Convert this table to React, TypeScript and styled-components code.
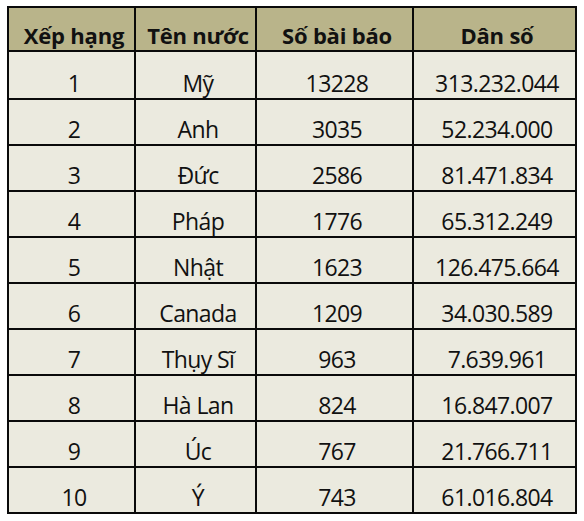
import React from "react";
import styled, { createGlobalStyle } from "styled-components";

const Global = createGlobalStyle`
  html, body { margin: 0; padding: 0; background: #ffffff; }
  body { font-family: "Open Sans", "Noto Sans", sans-serif; }
`;

const Page = styled.div`
  padding: 6px 0 0 7px;
`;

const Table = styled.div`
  display: grid;
  grid-template-columns: 125px 119px 155px 161px;
  grid-template-rows: 42px 46px repeat(9, 44px);
  gap: 2px;
  padding: 2px;
  background: #0a0a0a;
  width: max-content;
`;

const Cell = styled.div<{ $head?: boolean }>`
  display: flex;
  align-items: flex-end;
  justify-content: center;
  padding-left: 5px;
  background: ${(p) => (p.$head ? "#b9b48a" : "#ebeadf")};
  color: #111111;
  font-family: "Open Sans", "Noto Sans", sans-serif;
  font-size: ${(p) => (p.$head ? "22px" : "23px")};
  font-weight: ${(p) => (p.$head ? 700 : 400)};
  letter-spacing: ${(p) => (p.$head ? "-0.2px" : "-0.6px")};
  line-height: ${(p) => (p.$head ? "29px" : "30px")};
  white-space: nowrap;
`;

const headers = ["Xếp hạng", "Tên nước", "Số bài báo", "Dân số"];

const rows: [string, string, string, string][] = [
  ["1", "Mỹ", "13228", "313.232.044"],
  ["2", "Anh", "3035", "52.234.000"],
  ["3", "Đức", "2586", "81.471.834"],
  ["4", "Pháp", "1776", "65.312.249"],
  ["5", "Nhật", "1623", "126.475.664"],
  ["6", "Canada", "1209", "34.030.589"],
  ["7", "Thụy Sĩ", "963", "7.639.961"],
  ["8", "Hà Lan", "824", "16.847.007"],
  ["9", "Úc", "767", "21.766.711"],
  ["10", "Ý", "743", "61.016.804"],
];

export default function App() {
  return (
    <Page>
      <Global />
      <Table>
        {headers.map((h) => (
          <Cell key={h} $head>
            {h}
          </Cell>
        ))}
        {rows.map((r) =>
          r.map((v, i) => <Cell key={r[0] + "-" + i}>{v}</Cell>)
        )}
      </Table>
    </Page>
  );
}
